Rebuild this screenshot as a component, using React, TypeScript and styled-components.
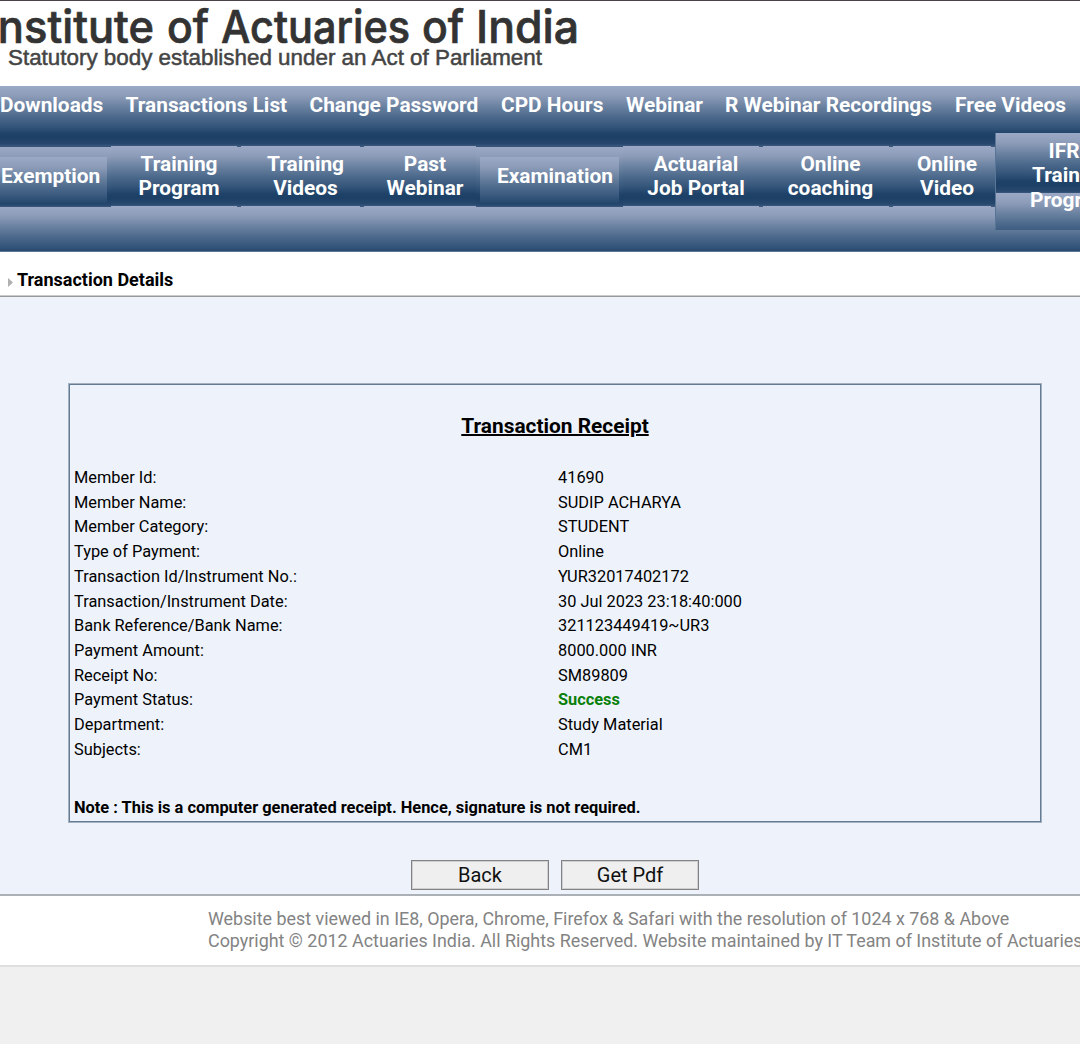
import React from "react";
import styled, { createGlobalStyle, css } from "styled-components";

const Global = createGlobalStyle`
  *, *::before, *::after { box-sizing: border-box; }
  html, body { margin: 0; padding: 0; }
  body { background: #f0f0f0; font-family: Roboto, "Liberation Sans", sans-serif; color: #000; overflow: hidden; }
`;

const tile = css`
  background-image: linear-gradient(
    to bottom,
    #9ba9c6 0px,
    #8c9cb8 10px,
    #6c83a2 20px,
    #4e6b8d 30px,
    #335479 41px,
    #1f4268 48px,
    #1d4066 52px,
    #28486e 58px,
    #3a587e 60px
  );
  background-size: 100% 60px;
  background-repeat: repeat-y;
`;

const Page = styled.div`
  width: 1080px;
  height: 1044px;
  overflow: hidden;
  background: #f0f0f0;
`;

const Header = styled.header`
  height: 86px;
  background: #fff;
  border-top: 1px solid #4b4249;
`;

const Logo = styled.svg`
  display: block;
`;

const Nav = styled.nav`
  height: 166px;
  ${tile}
  border-bottom: 1px solid #5c7898;
  color: #fff;
  font-size: 20.87px;
  font-weight: 700;
  line-height: 24.4px;
`;

const MainRow = styled.div`
  display: flex;
  height: 60px;
  padding-top: 7px;
`;

const MainLink = styled.a<{ $w: number }>`
  flex: none;
  width: ${(p) => p.$w}px;
  white-space: nowrap;
`;

const SubRow = styled.div`
  display: flex;
  height: 60px;
`;

const SubLink = styled.a<{ $w: number; $left?: number; $gap?: boolean }>`
  flex: none;
  width: ${(p) => p.$w}px;
  height: 61px;
  padding: 6px 0 0 ${(p) => p.$left ?? 0}px;
  text-align: center;
  white-space: pre;
  ${(p) =>
    p.$gap &&
    css`
      background:
        linear-gradient(#3a587e, #3a587e) right top / 4px 1px no-repeat,
        linear-gradient(#3a587e, #3a587e) right bottom / 4px 1px no-repeat;
    `}
`;

const SingleCell = styled.div<{ $w: number; $left: number }>`
  flex: none;
  width: ${(p) => p.$w}px;
  height: 61px;
  padding: 11px 4px 3px ${(p) => p.$left}px;
  ${tile}
  background-position: 0 1px;
`;

const SingleLink = styled.a<{ $pad: number }>`
  display: block;
  height: 47px;
  padding: 7px 0 0 ${(p) => p.$pad}px;
  white-space: nowrap;
  ${tile}
  background-size: 100% 62px;
`;

const TallLink = styled.a`
  flex: none;
  width: 150px;
  height: 97px;
  margin-top: -13px;
  padding-top: 6px;
  text-align: center;
  white-space: pre;
  border-left: 1px solid #5a7697;
  border-bottom: 1px solid #3f5f84;
  ${tile}
`;

const TitleBar = styled.div`
  display: flex;
  align-items: center;
  gap: 4px;
  height: 45px;
  padding: 12px 0 0 8px;
  background: #fff;
  border-bottom: 1px solid #97999d;
  box-shadow: inset 0 -1px 0 #c9cbcd;
`;

const Arrow = styled.svg`
  margin-top: 5px;
`;

const Title = styled.h1`
  margin: 0;
  font-size: 18px;
  font-weight: 700;
  line-height: 22px;
`;

const Panel = styled.main`
  height: 599px;
  padding: 86px 38px 0 68px;
  background: #eef3fb;
  border-bottom: 2px solid #acb1b7;
`;

const Receipt = styled.section`
  width: 974px;
  height: 440px;
  padding: 29px 5px 0;
  border: 1px solid #a3b1c0;
  box-shadow: inset 0 0 0 1px #647c93;
`;

const Heading = styled.h2`
  margin: 0 0 27px;
  text-align: center;
  font-size: 20.87px;
  line-height: 26px;
  font-weight: 700;
  text-decoration: underline;
  text-decoration-thickness: 1.5px;
  text-underline-offset: 1px;
`;

const Row = styled.div`
  display: grid;
  grid-template-columns: 484px 1fr;
  height: 24.73px;
  line-height: 24.73px;
  font-size: 16.36px;
`;

const Value = styled.span<{ $success?: boolean }>`
  color: ${(p) => (p.$success ? "#0a800a" : "#000")};
  font-weight: ${(p) => (p.$success ? 700 : 400)};
`;

const Note = styled.p`
  margin: 35px 0 0;
  font-size: 16.4px;
  font-weight: 700;
  line-height: 20px;
`;

const Buttons = styled.div`
  display: flex;
  justify-content: center;
  gap: 12px;
  margin-top: 37px;
`;

const Button = styled.button`
  width: 138px;
  height: 30px;
  padding: 0;
  background: #efefef;
  border: 1px solid #838386;
  box-shadow: inset 0 0 0 1px #d0d0d1;
  border-radius: 0;
  font: 400 20px/26px Roboto, sans-serif;
  color: #111;
`;

const Footer = styled.footer`
  height: 71px;
  padding: 12px 0 0 208px;
  background: #fff;
  border-bottom: 2px solid #dfdfdf;
  color: #838383;
  font-size: 17.9px;
  line-height: 22px;
  white-space: nowrap;
`;

const mainLinks: [string, number][] = [
  ["Downloads", 125.5],
  ["Transactions List", 184],
  ["Change Password", 191.5],
  ["CPD Hours", 125],
  ["Webinar", 99],
  ["R Webinar Recordings", 230],
  ["Free Videos", 125],
];

const rows: [string, string][] = [
  ["Member Id:", "41690"],
  ["Member Name:", "SUDIP ACHARYA"],
  ["Member Category:", "STUDENT"],
  ["Type of Payment:", "Online"],
  ["Transaction Id/Instrument No.:", "YUR32017402172"],
  ["Transaction/Instrument Date:", "30 Jul 2023 23:18:40:000"],
  ["Bank Reference/Bank Name:", "321123449419~UR3"],
  ["Payment Amount:", "8000.000 INR"],
  ["Receipt No:", "SM89809"],
  ["Payment Status:", "Success"],
  ["Department:", "Study Material"],
  ["Subjects:", "CM1"],
];

const logoWords: [string, number, number][] = [
  ["Institute", -14, 168],
  ["of", 167, 42],
  ["Actuaries", 221, 189],
  ["of", 422, 42],
  ["India", 476, 103],
];

export default function App() {
  return (
    <Page>
      <Global />
      <Header>
        <Logo width="600" height="80" viewBox="0 1 600 80">
          <g
            fontFamily="Inter, sans-serif"
            fontSize="45"
            fontWeight="500"
            fill="#333"
            stroke="#333"
            strokeWidth="0.7"
            strokeLinejoin="round"
          >
            {logoWords.map(([word, x, w]) => (
              <text key={x} x={x} y={42.8} textLength={w} lengthAdjust="spacingAndGlyphs">
                {word}
              </text>
            ))}
          </g>
          <text
            x="8"
            y="65"
            textLength="534"
            lengthAdjust="spacingAndGlyphs"
            fontFamily="Liberation Sans, Arial, sans-serif"
            fontSize="22"
            fill="#444"
            stroke="#444"
            strokeWidth="0.5"
          >
            Statutory body established under an Act of Parliament
          </text>
        </Logo>
      </Header>
      <Nav>
        <MainRow>
          {mainLinks.map(([label, w]) => (
            <MainLink key={label} $w={w}>{label}</MainLink>
          ))}
        </MainRow>
        <SubRow>
          <SingleCell $w={111} $left={0}>
            <SingleLink $pad={1}>Exemption</SingleLink>
          </SingleCell>
          <SubLink $w={130} $left={6} $gap>{"Training\nProgram"}</SubLink>
          <SubLink $w={123} $left={6} $gap>{"Training\nVideos"}</SubLink>
          <SubLink $w={112} $left={10}>{"Past\nWebinar"}</SubLink>
          <SingleCell $w={147} $left={4}>
            <SingleLink $pad={17}>Examination</SingleLink>
          </SingleCell>
          <SubLink $w={140} $left={6} $gap>{"Actuarial\nJob Portal"}</SubLink>
          <SubLink $w={130} $left={5} $gap>{"Online\ncoaching"}</SubLink>
          <SubLink $w={102} $left={6} $gap>{"Online\nVideo"}</SubLink>
          <TallLink>{"IFRS\nTraining\nProgram"}</TallLink>
        </SubRow>
      </Nav>
      <TitleBar>
        <Arrow width="5" height="9" viewBox="0 0 5 9">
          <path d="M0 0L5 4.5L0 9Z" fill="#b0b0b0" />
        </Arrow>
        <Title>Transaction Details</Title>
      </TitleBar>
      <Panel>
        <Receipt>
          <Heading>Transaction Receipt</Heading>
          {rows.map(([label, value]) => (
            <Row key={label}>
              <span>{label}</span>
              <Value $success={value === "Success"}>{value}</Value>
            </Row>
          ))}
          <Note>Note : This is a computer generated receipt. Hence, signature is not required.</Note>
        </Receipt>
        <Buttons>
          <Button>Back</Button>
          <Button>Get Pdf</Button>
        </Buttons>
      </Panel>
      <Footer>
        <div>Website best viewed in IE8, Opera, Chrome, Firefox &amp; Safari with the resolution of 1024 x 768 &amp; Above</div>
        <div>Copyright © 2012 Actuaries India. All Rights Reserved. Website maintained by IT Team of Institute of Actuaries of India</div>
      </Footer>
    </Page>
  );
}
